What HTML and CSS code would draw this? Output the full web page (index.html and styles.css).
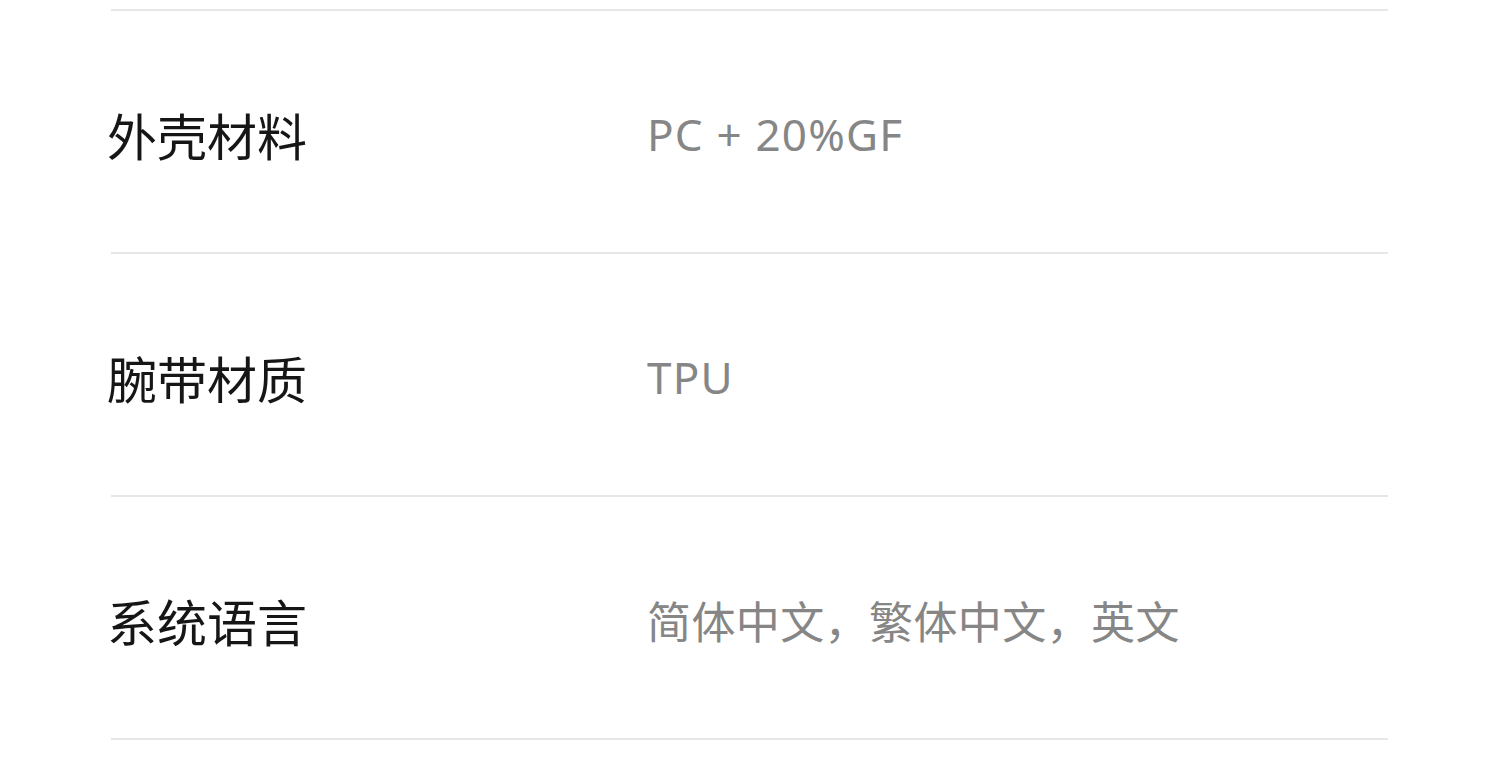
FILE: index.html
```html
<!DOCTYPE html>
<html lang="zh-CN">
<head>
<meta charset="utf-8">
<link rel="stylesheet" href="styles.css">
</head>
<body>
<div class="specs">
  <div class="row">
    <div class="label">外壳材料</div>
    <div class="value latin">PC + 20%GF</div>
  </div>
  <div class="row">
    <div class="label">腕带材质</div>
    <div class="value latin">TPU</div>
  </div>
  <div class="row">
    <div class="label">系统语言</div>
    <div class="value">简体中文，繁体中文，英文</div>
  </div>
</div>
</body>
</html>
```
FILE: styles.css
```css
html, body {
  margin: 0;
  padding: 0;
  background: #ffffff;
}
body {
  font-family: "Noto Sans", "Noto Sans CJK SC", sans-serif;
}
.specs {
  margin: 9px 112px 0 111px;
  border-top: 2px solid #e7e7e7;
}
.row {
  display: flex;
  align-items: center;
  box-sizing: border-box;
  height: 243px;
  padding-top: 5px;
  border-bottom: 2px solid #e7e7e7;
}
.label {
  width: 540px;
  margin-left: -4px;
  font-size: 50px;
  color: #161616;
  font-family: "Noto Sans CJK SC", sans-serif;
}
.value {
  font-size: 44px;
  letter-spacing: 0.4px;
  color: #868686;
}
.value.latin {
  letter-spacing: 1.2px;
}
```
